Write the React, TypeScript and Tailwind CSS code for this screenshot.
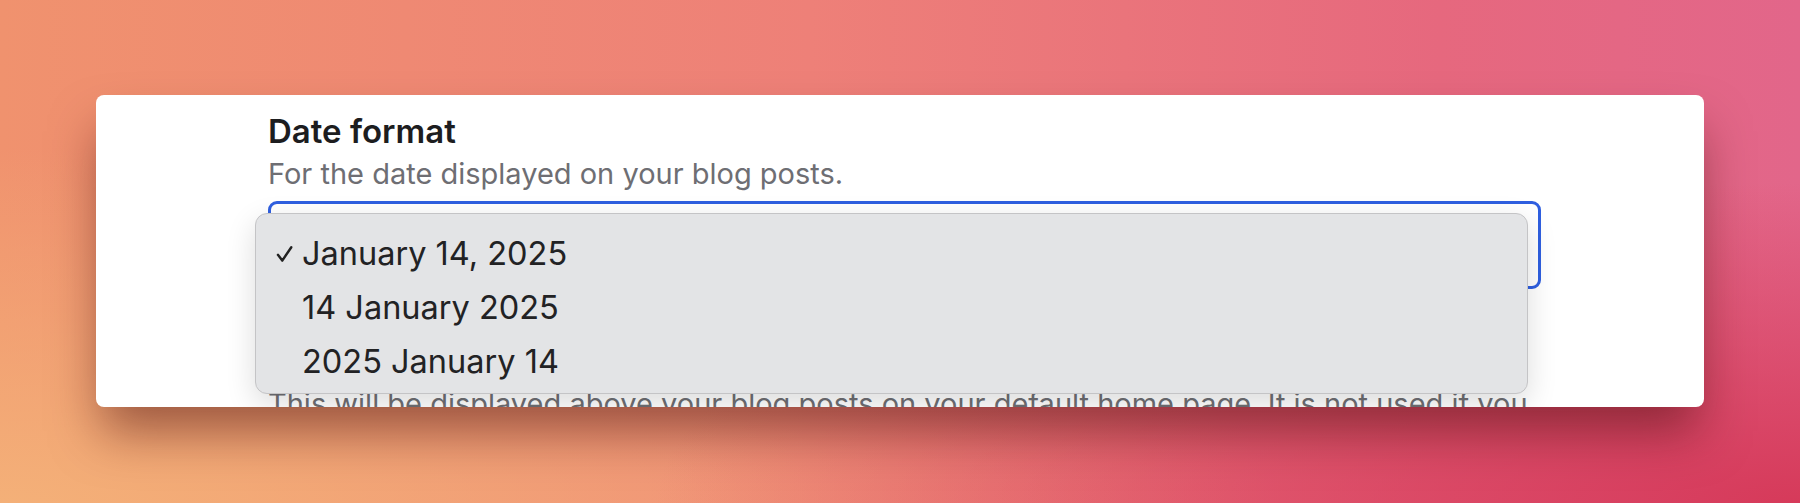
const options = ['January 14, 2025', '14 January 2025', '2025 January 14'];

function CheckMark() {
  return (
    <svg viewBox="0 0 16 16" className="h-[18px] w-[17px]" fill="none">
      <path d="M1.8 8.8 L5.9 14.2 L14.4 1.6" stroke="#222" strokeWidth="2.3" strokeLinecap="round" strokeLinejoin="round" />
    </svg>
  );
}

function DateMenu() {
  return (
    <div className="absolute left-[-16px] top-[9px] z-10 w-[1273px] h-[181px] rounded-[12px] border border-[#c4c4c6] bg-[#e3e4e6] pt-[13px] shadow-[0_10px_30px_rgba(0,0,0,0.14)]">
      {options.map((opt, i) => (
        <div key={opt} className="flex h-[54px] items-center">
          <span className="flex w-[46px] shrink-0 justify-end pr-[9px]">{i === 0 && <CheckMark />}</span>
          <span className="text-[32.5px] leading-[54px] text-[#222224]">{opt}</span>
        </div>
      ))}
    </div>
  );
}

export default function App() {
  return (
    <div
      className="h-[503px] w-full overflow-hidden pl-[96px] pt-[95px] bg-[radial-gradient(ellipse_at_100%_100%,#d63a5a_0%,transparent_45%),radial-gradient(ellipse_at_0%_100%,#f4b078_0%,transparent_50%),linear-gradient(90deg,#f0926e_0%,#ee8078_45%,#e6687e_80%,#e2668a_100%)]"
      style={{ fontFamily: 'Inter, "Noto Sans", sans-serif' }}
    >
      <div className="flex h-[312px] w-[1608px] overflow-hidden rounded-[8px] bg-white pl-[172px] pr-[163px] pt-[17px] shadow-[0_30px_50px_-6px_rgba(70,10,10,0.5)]">
        <div className="flex w-full flex-col">
          <h2 className="shrink-0 text-[33px] font-semibold leading-[38px] text-[#1d1d1f]">Date format</h2>
          <p className="mt-[6px] shrink-0 text-[29px] leading-[35px] text-[#6e6e73]">For the date displayed on your blog posts.</p>
          <div className="relative mt-[10px] h-[88px] w-full shrink-0 rounded-[9px] border-[3px] border-[#2f5fe0] bg-white">
            <DateMenu />
          </div>
          <p className="mt-[97px] shrink-0 whitespace-nowrap text-[29px] leading-[35px] text-[#6e6e73]">
            This will be displayed above your blog posts on your default home page. It is not used if you
          </p>
        </div>
      </div>
    </div>
  );
}
